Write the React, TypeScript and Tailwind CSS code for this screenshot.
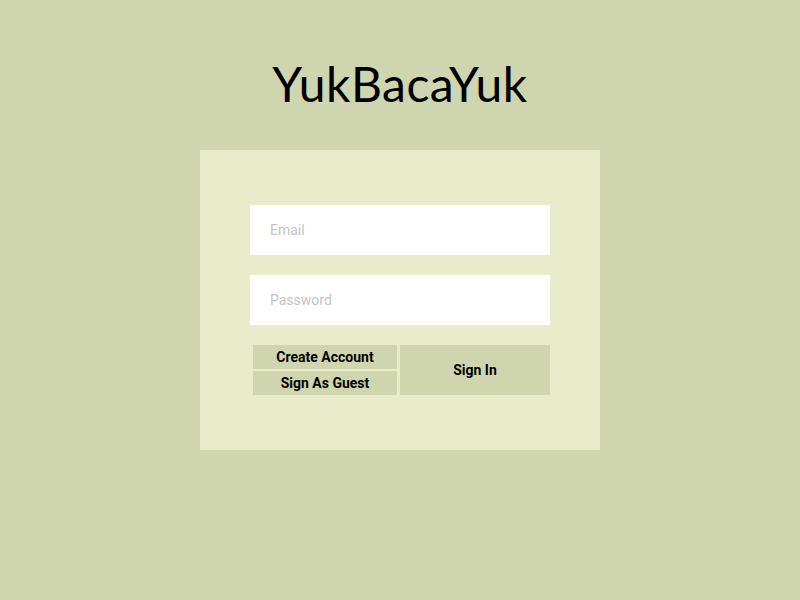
export default function App() {
  return (
    <div className="w-[800px] h-[600px] bg-[#cfd5ae] flex flex-col items-center font-['Roboto',sans-serif]">
      <h1 className="mt-[54px] text-[48px] leading-[60px] text-black font-['Lato',sans-serif] tracking-[0.5px]">
        YukBacaYuk
      </h1>
      <div className="mt-[36px] w-[400px] h-[300px] bg-[#e8ecca] px-[50px] pt-[55px]">
        <input
          type="email"
          placeholder="Email"
          className="block w-[300px] h-[50px] bg-white px-5 text-sm outline-none placeholder:text-[#c4c4c4]"
        />
        <input
          type="password"
          placeholder="Password"
          className="mt-5 block w-[300px] h-[50px] bg-white px-5 text-sm outline-none placeholder:text-[#c4c4c4]"
        />
        <div className="mt-5 flex gap-[3px] pl-[3px]">
          <div className="flex flex-col gap-[2px] w-[144px]">
            <button className="h-[24px] bg-[#cfd5ae] text-sm font-bold text-black">
              Create Account
            </button>
            <button className="h-[24px] bg-[#cfd5ae] text-sm font-bold text-black">
              Sign As Guest
            </button>
          </div>
          <button className="w-[150px] h-[50px] bg-[#cfd5ae] text-sm font-bold text-black">
            Sign In
          </button>
        </div>
      </div>
    </div>
  );
}
